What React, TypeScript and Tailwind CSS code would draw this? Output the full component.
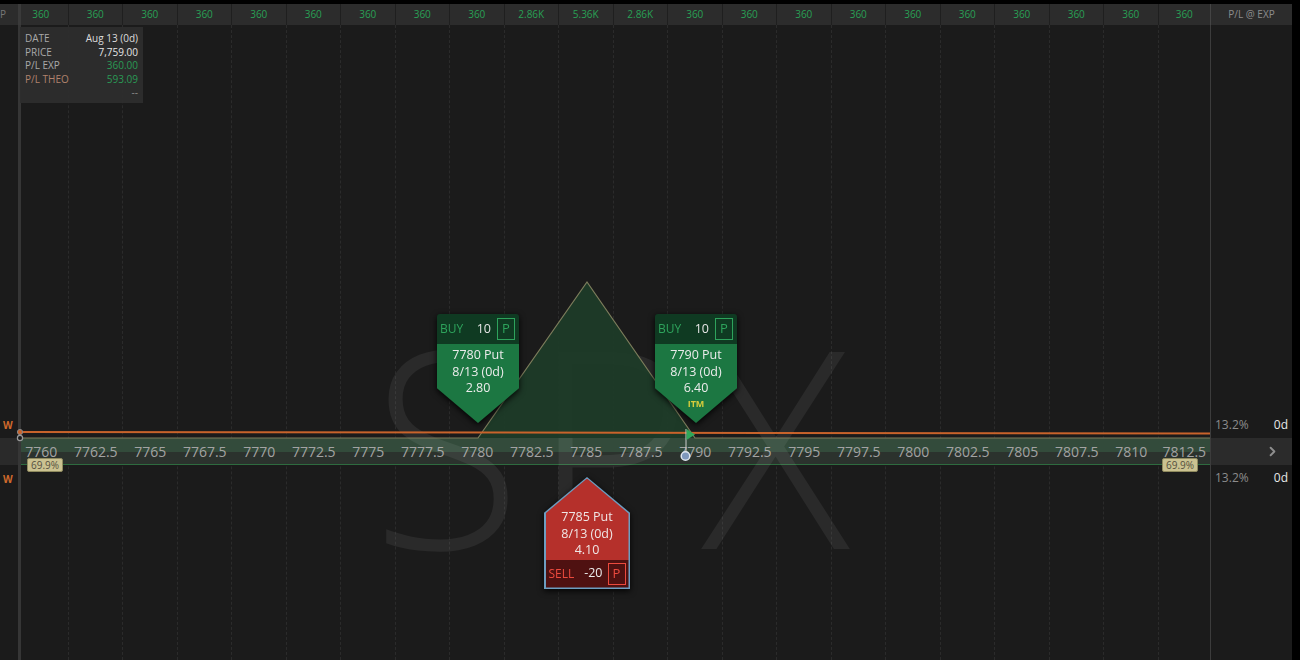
import { ChevronRight } from "lucide-react";

const headerVals = [
  "360", "360", "360", "360", "360", "360", "360", "360", "360",
  "2.86K", "5.36K", "2.86K",
  "360", "360", "360", "360", "360", "360", "360", "360", "360", "360",
];

const strikes = Array.from({ length: 22 }, (_, i) => {
  const v = 7760 + i * 2.5;
  return Number.isInteger(v) ? String(v) : v.toFixed(1);
});

const colTemplate = "grid grid-cols-[14px_repeat(21,54.5px)_1fr]";

function BuyCard({ strike, price, itm, left }: { strike: string; price: string; itm?: boolean; left: string }) {
  return (
    <div className={`absolute top-[289px] ${left} w-[82px] drop-shadow-[0_2px_3px_rgba(0,0,0,0.9)]`}>
      <div className="flex h-[30px] items-center rounded-t-[3px] bg-[#0f3a22] pl-[3px] pr-[4px]">
        <span className="text-[12px] text-[#2ea35c]">BUY</span>
        <span className="ml-auto mr-[6px] text-[12.5px] text-[#e6e6e6]">10</span>
        <span className="flex h-[22px] w-[18px] items-center justify-center border border-[#2ea35c] text-[13px] text-[#2ea35c]">P</span>
      </div>
      <div className="flex h-[79px] flex-col items-center bg-[#1c7742] pt-[3px] text-[12.5px] leading-[16.5px] text-[#ececec] [clip-path:polygon(0_0,100%_0,100%_56%,50%_100%,0_56%)]">
        <span>{strike} Put</span>
        <span>8/13 (0d)</span>
        <span>{price}</span>
        {itm ? <span className="mt-[1px] text-[9px] font-bold leading-[12px] text-[#d6cc3c]">ITM</span> : null}
      </div>
    </div>
  );
}

function SellCard() {
  return (
    <div className="absolute left-[544px] top-[452px] w-[86px] drop-shadow-[0_2px_3px_rgba(0,0,0,0.9)]">
      <div className="h-[112px] bg-[#6d9dc0] p-[1.5px] [clip-path:polygon(50%_0,100%_32%,100%_100%,0_100%,0_32%)]">
        <div className="flex h-full flex-col [clip-path:polygon(50%_0,100%_32%,100%_100%,0_100%,0_32%)]">
          <div className="flex flex-1 flex-col items-center justify-end bg-[#b5302b] pb-[1px] text-[12.5px] leading-[16.5px] text-[#efe6e6]">
            <span>7785 Put</span>
            <span>8/13 (0d)</span>
            <span>4.10</span>
          </div>
          <div className="flex h-[28px] items-center bg-[#4f1111] pl-[3px] pr-[3px]">
            <span className="text-[12px] text-[#ec4a3e]">SELL</span>
            <span className="ml-auto mr-[5px] text-[12.5px] text-[#ececec]">-20</span>
            <span className="flex h-[22px] w-[18px] items-center justify-center border border-[#ec4a3e] text-[13px] text-[#ec4a3e]">P</span>
          </div>
        </div>
      </div>
    </div>
  );
}

export default function App() {
  return (
    <div className="flex h-[660px] w-[1300px] overflow-hidden bg-black font-['Open_Sans',sans-serif]">
      <div className="flex w-[1292px] flex-col">
        <div className="h-[4px] bg-black" />
        {/* header */}
        <div className="flex h-[21px]">
          <div className={`relative w-[1210px] bg-[#2c2c2c] ${colTemplate}`}>
            <div className="overflow-hidden text-[10px] leading-[21px] text-[#777]">P</div>
            {headerVals.map((v, i) => (
              <div
                key={i}
                className={`flex items-center justify-center text-[10px] text-[#29a055] ${i < 21 ? "border-r border-[#1f1f1f]" : ""}`}
              >
                {v}
              </div>
            ))}
            <div className="absolute bottom-0 left-[18px] top-0 w-[3px] bg-[#3a3a3a]" />
          </div>
          <div className="flex w-[82px] items-center justify-center border-l border-[#444] bg-[#2c2c2c] text-[10px] text-[#8c8c8c]">
            P/L @ EXP
          </div>
        </div>

        {/* body */}
        <div className="flex flex-1">
          <div className="relative flex w-[1210px] flex-col bg-[#1b1b1b]">
            {/* grid lines */}
            <div className={`absolute inset-0 ${colTemplate}`}>
              <div />
              {strikes.map((s, i) => (
                <div key={s} className={i < 21 ? "border-r border-dashed border-[#2b2b2b]" : ""} />
              ))}
            </div>

            <div className="h-[413px]" />
            <div className={`relative h-[27px] bg-[#2a2a2a] ${colTemplate}`}>
              <div className="absolute bottom-0 left-[20px] right-0 top-0 flex flex-col border-b border-[#2e6b3f]">
                <div className="h-[14px] bg-[#334b3b]" />
                <div className="flex-1 bg-[#2b322d]" />
              </div>
              <div />
              {strikes.map((s) => (
                <div key={s} className="relative flex items-center justify-center whitespace-nowrap text-[14px] text-[#a3a3a3]">
                  {s}
                </div>
              ))}
            </div>
            <div className="flex-1" />

            {/* price line */}
            <div className="absolute bottom-0 left-[18px] top-0 w-[3px] bg-[#363636]" />

            {/* watermark */}
            <div className="pointer-events-none absolute left-[20px] right-0 top-[267px] flex h-[300px] items-center justify-center">
              <span className="text-[276px] font-light leading-none tracking-[9px] text-white/[0.065]">SPX</span>
            </div>

            {/* P/L graph */}
            <svg className="absolute left-0 top-0" width="1210" height="635">
              <polygon points="478,413 587,257 695,413" fill="#1e3b28" fillOpacity="0.95" />
              <polyline points="20,413 478,413 587,257 695,413 1210,413" fill="none" stroke="#7d7d5c" strokeWidth="1.2" />
              <path d="M20 407 Q 600 406.5 1210 408.5" fill="none" stroke="#c8632b" strokeWidth="2" />
              <circle cx="20" cy="407" r="2.6" fill="#c8632b" stroke="#888" strokeWidth="1" />
              <circle cx="20" cy="413" r="2.6" fill="#1b1b1b" stroke="#999" strokeWidth="1.2" />
              <line x1="686" y1="404" x2="686" y2="430" stroke="#cfcfcf" strokeWidth="1" />
              <polygon points="686.5,404 695,409.5 686.5,415" fill="#2fa85a" />
              <circle cx="685.5" cy="431" r="4.3" fill="#7f98bd" stroke="#dfe6ef" strokeWidth="1.5" />
            </svg>

            {/* W labels */}
            <span className="absolute left-[3px] top-[393px] text-[10px] font-bold text-[#d06a2c]">W</span>
            <span className="absolute left-[3px] top-[447px] text-[10px] font-bold text-[#d06a2c]">W</span>

            {/* 69.9% badges */}
            <span className="absolute left-[27px] top-[433px] rounded-[2px] border border-[#8f8a5e] bg-[#cbc291] px-[3px] text-[10px] leading-[12px] text-[#555040]">69.9%</span>
            <span className="absolute left-[1162px] top-[433px] rounded-[2px] border border-[#8f8a5e] bg-[#cbc291] px-[3px] text-[10px] leading-[12px] text-[#555040]">69.9%</span>

            {/* info box */}
            <div className="absolute left-[20px] top-[2px] w-[123px] bg-[#2d2d2d]/95 px-[5px] pb-[3px] pt-[5px] text-[10px] leading-[13.5px]">
              <div className="flex justify-between"><span className="text-[#a9a9a9]">DATE</span><span className="text-[#dcdcdc]">Aug 13 (0d)</span></div>
              <div className="flex justify-between"><span className="text-[#a9a9a9]">PRICE</span><span className="text-[#e6e6e6]">7,759.00</span></div>
              <div className="flex justify-between"><span className="text-[#a9a9a9]">P/L EXP</span><span className="text-[#2a9a55]">360.00</span></div>
              <div className="flex justify-between"><span className="text-[#b0826c]">P/L THEO</span><span className="text-[#2a9a55]">593.09</span></div>
              <div className="flex justify-end"><span className="text-[#8a8a8a]">--</span></div>
            </div>

            <BuyCard strike="7780" price="2.80" left="left-[437px]" />
            <BuyCard strike="7790" price="6.40" itm left="left-[655px]" />
            <SellCard />
          </div>

          {/* right panel */}
          <div className="flex w-[82px] flex-col border-l border-[#3c3c3c] bg-[#1b1b1b]">
            <div className="flex h-[413px] items-end">
              <div className="flex h-[26px] w-full items-center justify-between pl-[4px] pr-[4px] text-[12px]">
                <span className="text-[#8c8c8c]">13.2%</span>
                <span className="text-[#e8e8e8]">0d</span>
              </div>
            </div>
            <div className="flex h-[27px] items-center justify-end bg-[#2b2b2b] pr-[12px]">
              <ChevronRight size={15} strokeWidth={3} color="#8e8e8e" />
            </div>
            <div className="flex h-[26px] w-full items-center justify-between pl-[4px] pr-[4px] text-[12px]">
              <span className="text-[#8c8c8c]">13.2%</span>
              <span className="text-[#e8e8e8]">0d</span>
            </div>
          </div>
        </div>
      </div>
      <div className="w-[8px] bg-black" />
    </div>
  );
}
